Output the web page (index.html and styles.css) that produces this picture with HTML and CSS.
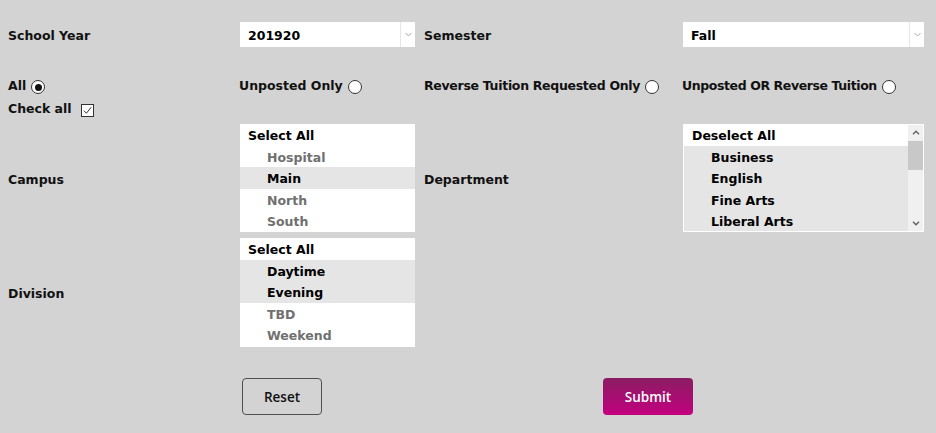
FILE: index.html
```html
<!DOCTYPE html>
<html>
<head>
<meta charset="utf-8">
<link rel="stylesheet" href="styles.css">
</head>
<body>
<div class="form">
  <div class="row row-top">
    <div class="label">School Year</div>
    <div class="select sel-year"><span class="sel-text">201920</span><span class="sel-arrow"><svg width="7" height="5" viewBox="0 0 7 5"><path d="M0.5 1 L3.5 4 L6.5 1" fill="none" stroke="#a8a8a8" stroke-width="1"/></svg></span></div>
    <div class="label">Semester</div>
    <div class="select sel-sem"><span class="sel-text">Fall</span><span class="sel-arrow"><svg width="7" height="5" viewBox="0 0 7 5"><path d="M0.5 1 L3.5 4 L6.5 1" fill="none" stroke="#a8a8a8" stroke-width="1"/></svg></span></div>
  </div>

  <div class="row row-radio">
    <div class="radio-col">
      <div class="opt">All <span class="radio checked"></span></div>
      <div class="opt">Check all <span class="check"><svg width="13" height="13" viewBox="0 0 13 13"><rect x="0.5" y="0.5" width="12" height="12" fill="#fff" stroke="#333"/><path d="M2.8 6.6 L5.4 9.3 L10.2 3.2" fill="none" stroke="#333" stroke-width="1"/></svg></span></div>
    </div>
    <div class="radio-col"><div class="opt">Unposted Only <span class="radio"></span></div></div>
    <div class="radio-col"><div class="opt tight">Reverse Tuition Requested Only <span class="radio"></span></div></div>
    <div class="radio-col"><div class="opt tighter">Unposted OR Reverse Tuition <span class="radio"></span></div></div>
  </div>

  <div class="row row-list">
    <div class="label">Campus</div>
    <div class="listbox lb-small">
      <div class="item head">Select All</div>
      <div class="item sub">Hospital</div>
      <div class="item sub on">Main</div>
      <div class="item sub">North</div>
      <div class="item sub">South</div>
    </div>
    <div class="label">Department</div>
    <div class="listbox lb-dept">
      <div class="lb-items">
        <div class="item head">Deselect All</div>
        <div class="item sub on">Business</div>
        <div class="item sub on">English</div>
        <div class="item sub on">Fine Arts</div>
        <div class="item sub on">Liberal Arts</div>
      </div>
      <div class="scrollbar">
        <span class="sb-btn"><svg width="8" height="5" viewBox="0 0 8 5"><path d="M1 4.2 L4 1.2 L7 4.2" fill="none" stroke="#606060" stroke-width="1.4"/></svg></span>
        <span class="sb-thumb"></span>
        <span class="sb-track"></span>
        <span class="sb-btn"><svg width="8" height="5" viewBox="0 0 8 5"><path d="M1 0.8 L4 3.8 L7 0.8" fill="none" stroke="#606060" stroke-width="1.4"/></svg></span>
      </div>
    </div>
  </div>

  <div class="row row-list row-div">
    <div class="label">Division</div>
    <div class="listbox lb-small">
      <div class="item head">Select All</div>
      <div class="item sub on">Daytime</div>
      <div class="item sub on">Evening</div>
      <div class="item sub">TBD</div>
      <div class="item sub">Weekend</div>
    </div>
  </div>

  <div class="row row-buttons">
    <div></div>
    <div><button class="btn btn-reset">Reset</button></div>
    <div class="submit-cell"><button class="btn btn-submit">Submit</button></div>
  </div>
</div>
</body>
</html>
```

FILE: styles.css
```css
html, body {
  margin: 0;
  padding: 0;
  background: #d3d3d3;
}
body {
  width: 936px;
  height: 433px;
  overflow: hidden;
  font-family: "DejaVu Sans", Verdana, sans-serif;
  font-weight: bold;
  font-size: 12.5px;
  color: #111;
}
.form {
  padding: 22px 0 0 8px;
}
.row {
  display: grid;
  grid-template-columns: 231px 185px 258px 242px;
  align-items: center;
}
.row-top {
  height: 25px;
}
.label {
  white-space: nowrap;
  padding-top: 2px;
}
.select {
  display: flex;
  height: 25px;
  background: #fff;
  align-items: stretch;
}
.sel-year { width: 175px; margin-left: 1px; }
.sel-sem { width: 241px; margin-left: 1px; }
.sel-text {
  flex: 1;
  padding-left: 8px;
  padding-top: 1px;
  line-height: 25px;
  color: #000;
}
.sel-arrow {
  width: 14px;
  border-left: 1px solid #e6e6e6;
  display: flex;
  align-items: center;
  justify-content: center;
}
.row-radio {
  margin-top: 27px;
  align-items: start;
}
.opt {
  line-height: 23px;
  height: 23px;
  display: flex;
  align-items: center;
  white-space: nowrap;
}
.opt.tight { letter-spacing: -0.3px; }
.opt.tighter { letter-spacing: -0.4px; }
.radio {
  display: inline-block;
  width: 12px;
  height: 12px;
  border: 1px solid #333;
  border-radius: 50%;
  background: #fff;
  margin-left: 5px;
  margin-top: 3px;
  position: relative;
  box-sizing: content-box;
}
.radio.checked::after {
  content: "";
  position: absolute;
  left: 2.5px;
  top: 2.5px;
  width: 7px;
  height: 7px;
  border-radius: 50%;
  background: #111;
}
.check {
  display: inline-flex;
  margin-left: 9px;
  margin-top: 3px;
}
.row-list {
  margin-top: 4px;
}
.row-div {
  margin-top: 6px;
}
.listbox {
  background: #fff;
  height: 108px;
  overflow: hidden;
}
.lb-small { width: 175px; margin-left: 1px; }
.row-div .listbox { height: 109px; }
.item {
  height: 21.5px;
  line-height: 23px;
  white-space: nowrap;
}
.item.head {
  padding-left: 8px;
  color: #000;
}
.item.sub {
  padding-left: 27px;
  color: #707070;
}
.item.on {
  background: #e5e5e5;
  color: #000;
}
.lb-dept {
  width: 241px;
  margin-left: 1px;
  display: flex;
  box-sizing: border-box;
  border: 1px solid #fff;
}
.lb-items {
  flex: 1;
  margin-top: -1px;
}
.lb-dept .item.head {
  height: 22.5px;
  line-height: 24px;
  margin-bottom: -1px;
}
.scrollbar {
  width: 15px;
  margin-top: -1px;
  margin-bottom: -1px;
  background: #f0f0f0;
  display: flex;
  flex-direction: column;
}
.sb-btn {
  height: 17px;
  display: flex;
  align-items: center;
  justify-content: center;
}
.sb-thumb {
  height: 29px;
  background: #c8c8c8;
}
.sb-track {
  flex: 1;
}
.row-buttons {
  margin-top: 31px;
  grid-template-columns: 234px 361px 320px;
}
.btn {
  height: 37px;
  font-family: "Open Sans", "DejaVu Sans", sans-serif;
  font-weight: 600;
  font-size: 13.5px;
  border-radius: 4px;
  cursor: pointer;
}
.btn-reset {
  width: 80px;
  background: transparent;
  border: 1px solid #505050;
  color: #111;
}
.btn-submit {
  width: 90px;
  border: none;
  color: #fff;
  background: linear-gradient(#8a1d63, #c3007f);
}
```
